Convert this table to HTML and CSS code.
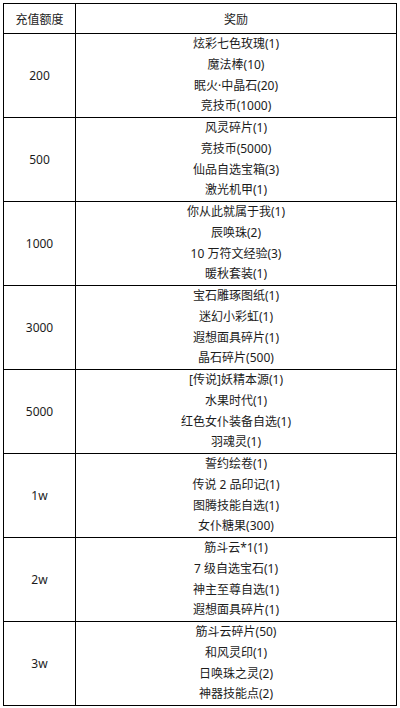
FILE: index.html
```html
<!DOCTYPE html>
<html>
<head>
<meta charset="utf-8">
<link rel="stylesheet" href="styles.css">
</head>
<body>
<table class="rewards">
  <thead>
    <tr><th class="amt">充值额度</th><th class="items">奖励</th></tr>
  </thead>
  <tbody>
    <tr><td class="amt">200</td><td class="items"><div class="line">炫彩七色玫瑰(1)</div><div class="line">魔法棒(10)</div><div class="line">眠火·中晶石(20)</div><div class="line">竞技币(1000)</div></td></tr>
    <tr><td class="amt">500</td><td class="items"><div class="line">风灵碎片(1)</div><div class="line">竞技币(5000)</div><div class="line">仙品自选宝箱(3)</div><div class="line">激光机甲(1)</div></td></tr>
    <tr><td class="amt">1000</td><td class="items"><div class="line">你从此就属于我(1)</div><div class="line">辰唤珠(2)</div><div class="line">10 万符文经验(3)</div><div class="line">暖秋套装(1)</div></td></tr>
    <tr><td class="amt">3000</td><td class="items"><div class="line">宝石雕琢图纸(1)</div><div class="line">迷幻小彩虹(1)</div><div class="line">遐想面具碎片(1)</div><div class="line">晶石碎片(500)</div></td></tr>
    <tr><td class="amt">5000</td><td class="items"><div class="line">[传说]妖精本源(1)</div><div class="line">水果时代(1)</div><div class="line">红色女仆装备自选(1)</div><div class="line">羽魂灵(1)</div></td></tr>
    <tr><td class="amt">1w</td><td class="items"><div class="line">誓约绘卷(1)</div><div class="line">传说 2 品印记(1)</div><div class="line">图腾技能自选(1)</div><div class="line">女仆糖果(300)</div></td></tr>
    <tr><td class="amt">2w</td><td class="items"><div class="line">筋斗云*1(1)</div><div class="line">7 级自选宝石(1)</div><div class="line">神主至尊自选(1)</div><div class="line">遐想面具碎片(1)</div></td></tr>
    <tr><td class="amt">3w</td><td class="items"><div class="line">筋斗云碎片(50)</div><div class="line">和风灵印(1)</div><div class="line">日唤珠之灵(2)</div><div class="line">神器技能点(2)</div></td></tr>
  </tbody>
</table>
</body>
</html>
```
FILE: styles.css
```css
html, body {
  margin: 0;
  padding: 0;
  background: #ffffff;
}
body {
  padding: 3px 0 0 3px;
  font-family: "Noto Sans", "Noto Sans CJK SC", sans-serif;
  font-size: 12px;
  color: #1c1c1c;
}
.rewards {
  border-collapse: collapse;
  width: 394px;
  table-layout: fixed;
}
.rewards th,
.rewards td {
  border: 1px solid #000000;
  padding: 0;
  text-align: center;
  vertical-align: middle;
  font-weight: normal;
}
.rewards th {
  height: 29px;
}
.rewards th.amt,
.rewards td.amt {
  width: 71px;
}
.rewards td {
  height: 83px;
}
.line {
  height: 20.75px;
  line-height: 20.75px;
  white-space: nowrap;
}
```
